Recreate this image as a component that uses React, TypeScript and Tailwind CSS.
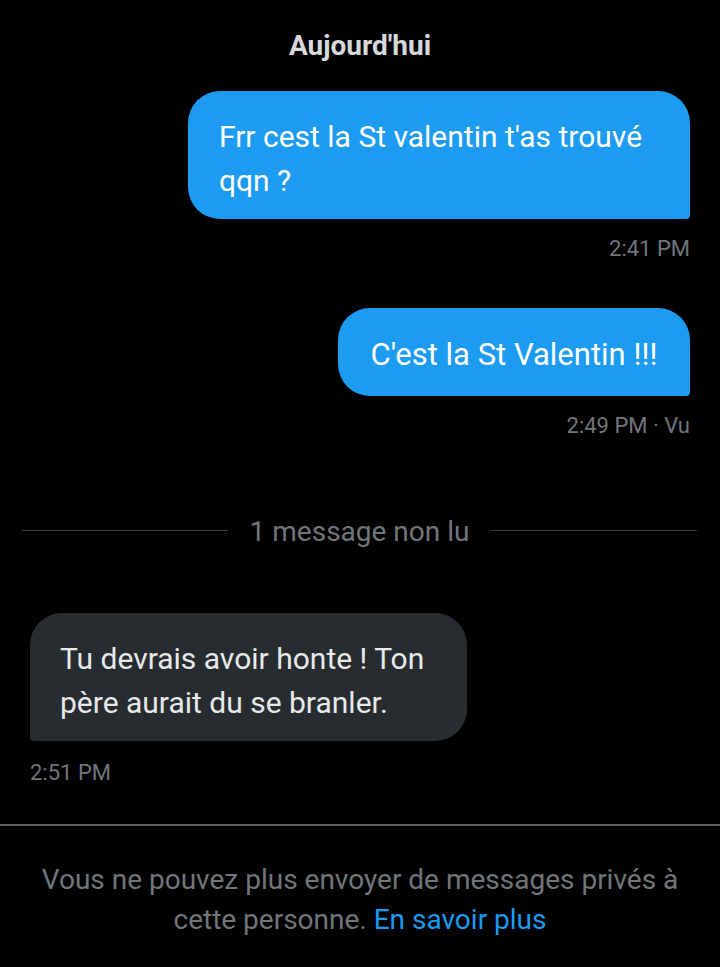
export default function App() {
  return (
    <div className="flex h-[967px] w-[720px] flex-col overflow-hidden bg-black font-['Roboto',sans-serif]">
      <div className="flex flex-col px-[30px]">
        <div className="pt-[31px] text-center text-[28px] font-bold leading-[30px] text-[#d6d9db]">
          Aujourd'hui
        </div>

        <div className="mt-[30px] ml-auto w-[502px] rounded-[32px] rounded-br-[4px] bg-[#1d9bf0] pt-[24px] pb-[16px] pl-[31px] pr-[28px] text-[30px] leading-[44px] text-white">
          Frr cest la St valentin t'as trouvé qqn ?
        </div>
        <div className="mt-[17px] text-right text-[22px] leading-[26px] text-[#71767b]">2:41 PM</div>

        <div className="mt-[46px] ml-auto w-[352px] rounded-[32px] rounded-br-[4px] bg-[#1d9bf0] pt-[25px] pb-[19px] text-center text-[31px] leading-[44px] text-white">
          C'est la St Valentin !!!
        </div>
        <div className="mt-[17px] text-right text-[22px] leading-[26px] text-[#71767b]">2:49 PM · Vu</div>

        <div className="mt-[76px] ml-[-8px] mr-[-7px] flex h-[30px] items-center gap-[22px]">
          <div className="h-px flex-1 bg-[#3e4144]" />
          <span className="pt-[3px] text-[28px] leading-[30px] text-[#71767b]">1 message non lu</span>
          <div className="h-px flex-1 bg-[#3e4144]" />
        </div>

        <div className="mt-[68px] mr-auto w-[437px] rounded-[32px] rounded-bl-[4px] bg-[#272c30] pt-[24px] pb-[16px] pl-[30px] pr-[24px] text-[30px] leading-[44px] text-[#e7e9ea]">
          Tu devrais avoir honte ! Ton père aurait du se branler.
        </div>
        <div className="mt-[19px] text-[22px] leading-[26px] text-[#71767b]">2:51 PM</div>
      </div>

      <div className="mt-[38px] border-t-2 border-[#5f6367] px-[30px] pt-[34px] text-center text-[28px] leading-[40px] text-[#71767b]">
        Vous ne pouvez plus envoyer de messages privés à cette personne.{' '}
        <span className="text-[#1d9bf0]">En savoir plus</span>
      </div>
    </div>
  );
}
